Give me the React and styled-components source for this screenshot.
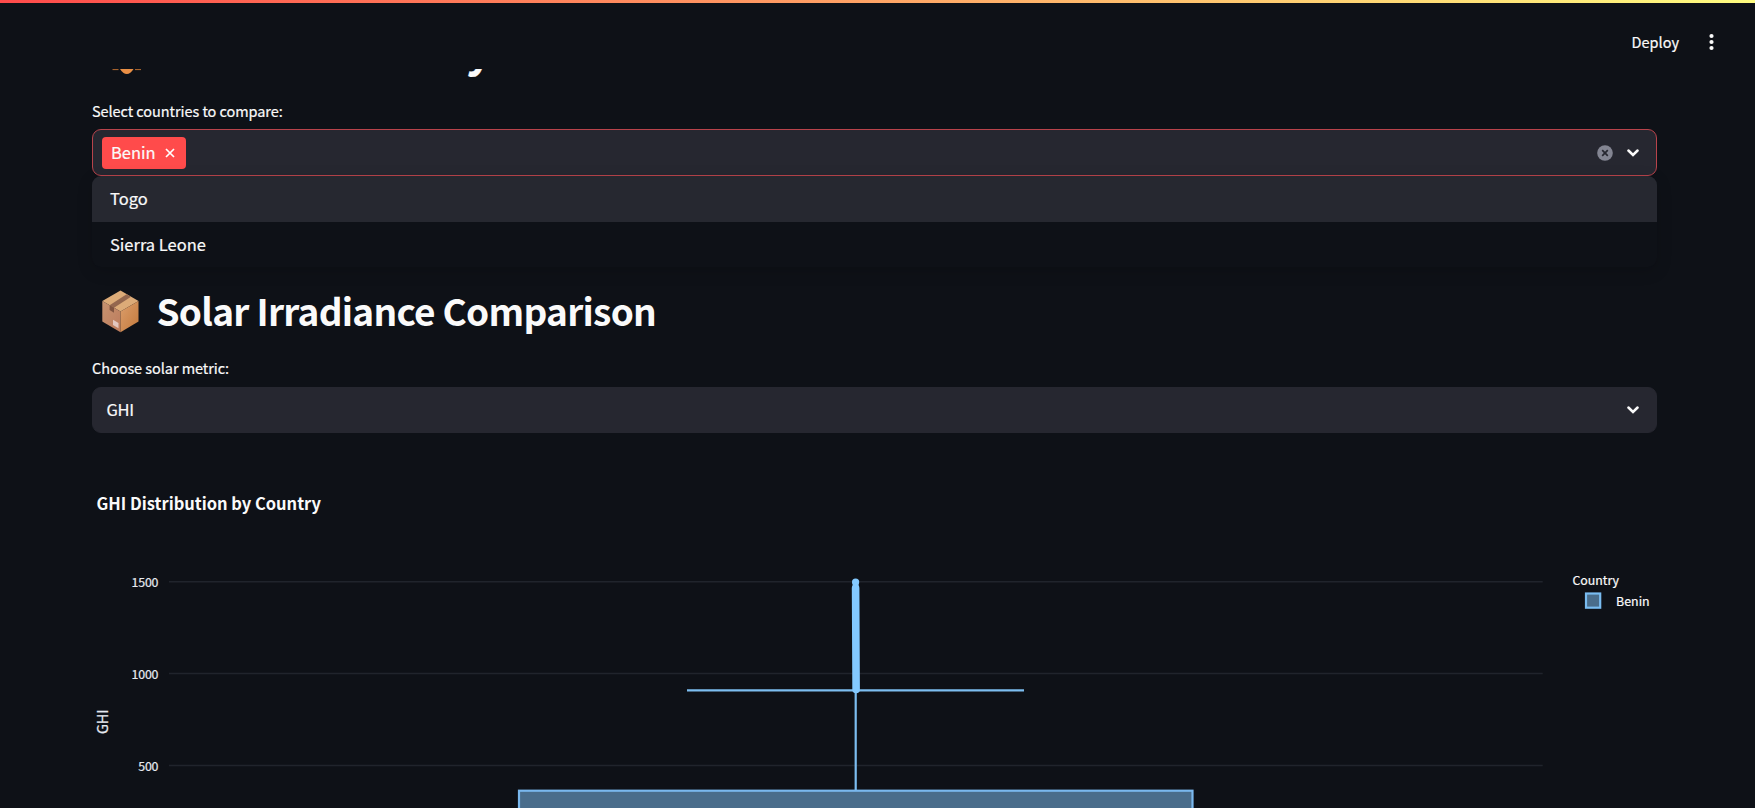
import React from "react";
import styled, { createGlobalStyle } from "styled-components";

const FONT = '"Noto Sans CJK JP", "Noto Sans CJK SC", "Noto Sans", sans-serif';

const GlobalStyle = createGlobalStyle`
  * { box-sizing: border-box; }
  html, body { margin: 0; height: 808px; overflow: hidden; background: #0e1117; }
  body { font-family: ${FONT}; color: #fafafa; -webkit-text-stroke: 0.2px currentColor; }
  svg { display: block; flex: none; }
`;

const Page = styled.div`
  display: flex;
  flex-direction: column;
  width: 1755px;
  height: 808px;
  overflow: hidden;
`;

const Decoration = styled.div`
  height: 3px;
  flex: none;
  background: linear-gradient(90deg, #ff4b4b, #fffd80);
`;

const Header = styled.header`
  height: 66px;
  flex: none;
  display: flex;
  justify-content: flex-end;
  align-items: center;
  gap: 30px;
  padding: 11px 41px 0 0;
`;

const Deploy = styled.span`
  font-size: 14.5px;
  line-height: 20px;
`;

const Main = styled.main`
  flex: 1;
  min-height: 0;
  overflow: hidden;
  padding: 0 98px 0 92px;
`;

const ScrolledTitle = styled.div`
  display: flex;
  height: 34px;
  overflow: hidden;
  padding-left: 20px;
`;

const TitleText = styled.span`
  margin-top: -52px;
  margin-left: 324px;
  font-size: 45px;
  font-weight: 700;
  line-height: 60px;
`;

const Label = styled.div`
  height: 26px;
  font-size: 14.5px;
  line-height: ${(p) => p.$line || 16}px;
  white-space: nowrap;
  letter-spacing: -0.06px;
`;

const Field = styled.div`
  position: relative;
`;

const Control = styled.div`
  display: flex;
  align-items: center;
  height: ${(p) => (p.$active ? 47 : 46)}px;
  padding: 0 16px 0 ${(p) => (p.$active ? 9 : 14)}px;
  border: 1px solid ${(p) => (p.$active ? "#b8434b" : "#262730")};
  border-radius: 9px;
  background: #262730;
  font-size: 16.5px;
`;

const Value = styled.span`
  line-height: 24px;
  padding-bottom: 2px;
  margin-left: -0.5px;
  letter-spacing: -0.3px;
`;

const Tag = styled.span`
  display: flex;
  align-items: center;
  gap: 9.5px;
  width: 84px;
  height: 32px;
  padding-left: 9px;
  border-radius: 4px;
  background: #ff4b4b;
  line-height: 30px;
`;

const TagText = styled.span`
  padding-bottom: 2px;
`;

const Spacer = styled.span`
  flex: 1;
`;

const Icons = styled.div`
  display: flex;
  align-items: center;
  gap: 13px;
`;

const Menu = styled.div`
  position: absolute;
  z-index: 2;
  top: 47px;
  left: 0;
  right: 0;
  height: 91px;
  border-radius: 9px;
  overflow: hidden;
  background: #0e1117;
  box-shadow: 0 4px 16px rgba(0, 0, 0, 0.16);
`;

const Option = styled.div`
  height: 46px;
  padding-left: 18px;
  font-size: 16.5px;
  line-height: 45px;
  background: ${(p) => (p.$highlighted ? "#262830" : "transparent")};
`;

const Heading = styled.h2`
  display: flex;
  align-items: center;
  gap: 18px;
  height: 60px;
  margin: 105px 0 20px;
  padding: 1px 0 0 9.5px;
  font-size: 37px;
  font-weight: 700;
  line-height: 55px;
  white-space: nowrap;
  letter-spacing: -0.73px;
  -webkit-text-stroke: 0;
`;

const HeadingText = styled.span`
  padding-bottom: 2px;
`;

const ChartArea = styled.div`
  margin-top: 27px;
  height: 348px;
`;

const ChartSvg = styled.svg`
  font-family: ${FONT};
  fill: #fafafa;
  -webkit-text-stroke: 0;
`;

const Chevron = () => (
  <svg width="14" height="10" viewBox="0 0 14 10">
    <path d="M2.4 2.5 7 7 11.6 2.5" fill="none" stroke="#fafafa" strokeWidth="2.5" strokeLinecap="round" />
  </svg>
);

const ClearIcon = () => (
  <svg width="16" height="16" viewBox="0 0 16 16">
    <circle cx="8" cy="8" r="7.8" fill="#838592" />
    <path d="m5.2 5.2 5.6 5.6M10.8 5.2 5.2 10.8" stroke="#262730" strokeWidth="1.7" />
  </svg>
);

const RemoveIcon = () => (
  <svg width="10" height="10" viewBox="0 0 10 10">
    <path d="m1 1 8 8M9 1 1 9" stroke="#fff" strokeWidth="1.7" />
  </svg>
);

const Dots = () => (
  <svg width="5" height="18" viewBox="0 0 5 18">
    {[3, 9, 15].map((y) => <circle key={y} cx="2.5" cy={y} r="2.1" fill="#fafafa" />)}
  </svg>
);

const SunEdge = () => (
  <svg width="30" height="8" viewBox="0 0 30 8">
    <path d="M0.5.6h6M23 .6h6" stroke="#b56c30" strokeWidth="1" />
    <path d="M8 0h13.5q-3 5-6.7 5T8 0Z" fill="#e98f45" />
  </svg>
);

const Package = () => (
  <svg width="37" height="43" viewBox="0 0 37 43">
    <defs>
      <linearGradient id="boxLeft" x1="0" y1="0" x2="1" y2="1">
        <stop offset="0" stopColor="#c69370" />
        <stop offset="1" stopColor="#bd7b5c" />
      </linearGradient>
      <linearGradient id="boxRight" x1="0" y1="0" x2="1" y2="1">
        <stop offset="0" stopColor="#db9e6c" />
        <stop offset="1" stopColor="#c47a3c" />
      </linearGradient>
    </defs>
    <path d="M18.5 0.5 36.5 11 18.5 21.5.3 11Z" fill="#dcab78" />
    <path d="M.3 11 18.5 21.5V42.3L.3 31.6Z" fill="url(#boxLeft)" />
    <path d="M36.5 11 18.5 21.5V42.3l18-10.7Z" fill="url(#boxRight)" />
    <path d="M24.6 4.2 29 6.7 12 17.7 7.6 15.2Z" fill="#94674e" />
    <path d="m7.6 15.2 4.4 2.5v5l-4.4-2.6Z" fill="#805440" />
    <path d="m11 29.8 5.5 3.2v5.2L11 35Z" fill="#e3c7bf" />
  </svg>
);

const TICKS = [
  { y: 121.7, label: "1500", w: 27 },
  { y: 213.5, label: "1000", w: 27 },
  { y: 305.5, label: "500", w: 20.3 },
];

const Chart = () => (
  <ChartSvg width="1565" height="348" viewBox="0 0 1565 348">
    <text x="4.5" y="49.7" fontSize="16.5" fontWeight="700" textLength="224.5">GHI Distribution by Country</text>
    {TICKS.map((t) => (
      <g key={t.label}>
        <path d={`M77 ${t.y}H1450.7`} stroke="#20242c" strokeWidth="1.5" />
        <text x={66.5 - t.w} y={t.y + 5.2} fontSize="12.4" textLength={t.w} fill="#e6eaf1" stroke="#e6eaf1" strokeWidth="0.2">{t.label}</text>
      </g>
    ))}
    <text transform="translate(16.2 274) rotate(-90)" fontSize="14.5" textLength="24.5" fill="#e6eaf1" stroke="#e6eaf1" strokeWidth="0.2">GHI</text>
    <rect x="427" y="330.7" width="673.5" height="40" fill="#4a6d8b" stroke="#7ab8ee" strokeWidth="2.2" />
    <path d="M595 230.3H932M763.7 230V330" stroke="#7cbdf0" strokeWidth="2.2" fill="none" />
    <path d="M763.6 128 764.1 229.5" stroke="#83c9ff" strokeWidth="7.6" strokeLinecap="round" />
    <circle cx="763.6" cy="122" r="3.6" fill="#83c9ff" />
    <path d="M763.6 122V132" stroke="#83c9ff" strokeWidth="5.8" />
    <text x="1480.5" y="125" fontSize="12.4" textLength="46.5" stroke="#fafafa" strokeWidth="0.2">Country</text>
    <rect x="1494" y="133.5" width="14.2" height="14.2" fill="#4a6d8b" stroke="#79bcf1" strokeWidth="2.2" />
    <text x="1524.1" y="146" fontSize="12.4" textLength="33.5" stroke="#fafafa" strokeWidth="0.2">Benin</text>
  </ChartSvg>
);

export default function App() {
  return (
    <>
      <GlobalStyle />
      <Page>
        <Decoration />
        <Header>
          <Deploy>Deploy</Deploy>
          <Dots />
        </Header>
        <Main>
          <ScrolledTitle>
            <SunEdge />
            <TitleText>y</TitleText>
          </ScrolledTitle>
          <Label>Select countries to compare:</Label>
          <Field>
            <Control $active>
              <Tag><TagText>Benin</TagText><RemoveIcon /></Tag>
              <Spacer />
              <Icons><ClearIcon /><Chevron /></Icons>
            </Control>
            <Menu>
              <Option $highlighted>Togo</Option>
              <Option>Sierra Leone</Option>
            </Menu>
          </Field>
          <Heading><Package /><HeadingText>Solar Irradiance Comparison</HeadingText></Heading>
          <Label $line={14}>Choose solar metric:</Label>
          <Control>
            <Value>GHI</Value>
            <Spacer />
            <Chevron />
          </Control>
          <ChartArea><Chart /></ChartArea>
        </Main>
      </Page>
    </>
  );
}
